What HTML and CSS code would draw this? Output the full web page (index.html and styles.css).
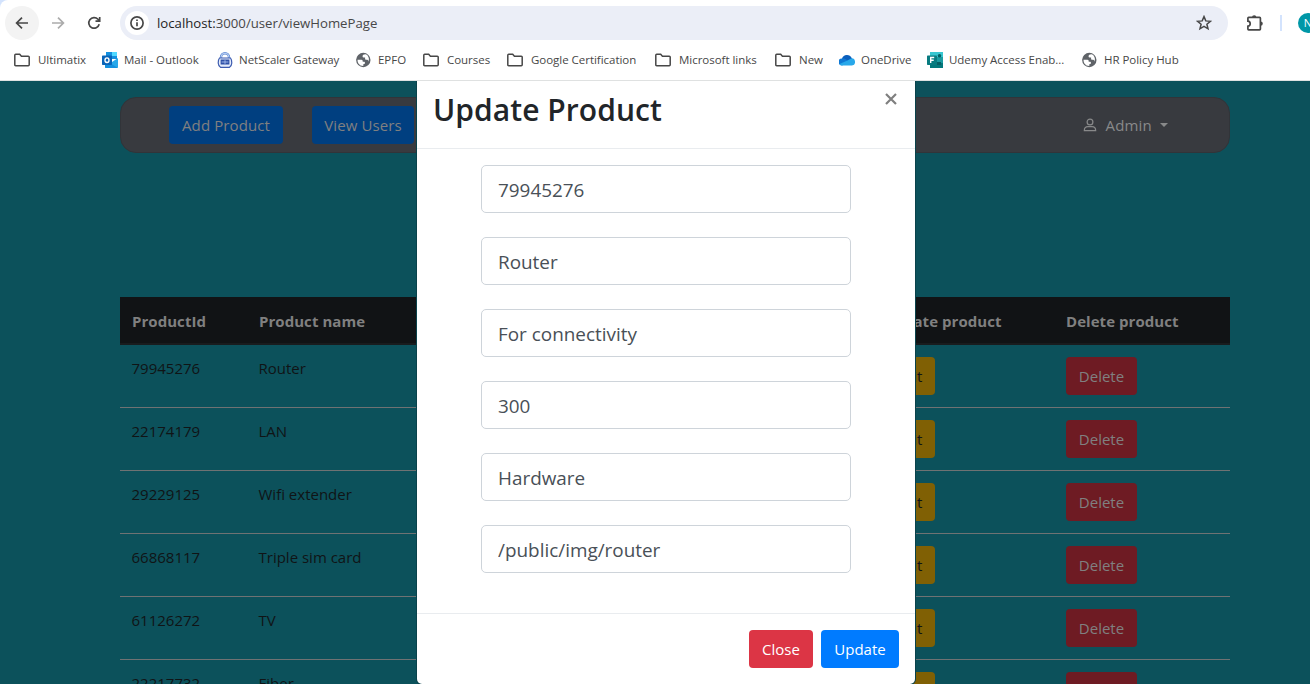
FILE: index.html
```html
<!DOCTYPE html>
<html lang="en">
<head>
<meta charset="utf-8">
<title>Update Product</title>
<link rel="stylesheet" href="styles.css">
</head>
<body>
<svg class="defs" aria-hidden="true">
  <symbol id="folder" viewBox="0 0 16 16"><path d="M.8 3.200q0-.9.9-.9h4l1.700 1.900h6.900q.9 0 .9.9v7.700q0 .9-.9.9H1.700q-.9 0-.9-.9z" fill="none" stroke="#474747" stroke-width="1.500"/></symbol>
  <symbol id="globe" viewBox="0 0 16 16"><circle cx="7.300" cy="8" r="7.200" fill="#5f6368"/><path d="M1.500 7.700h3.800q1.400 0 1.400 1.400v.6h1.600q.6 0 .6.800v1.300q-1.600 0-1.600.8v1.500Q4.100 14 2.600 11.700 1.400 9.800 1.500 7.700zM9.900 2.300l-1.900.1q-1.400.3-1.400 1.500v.9q0 .8 1 .8h1.500v1.400q0 .8.800.8h1.300q.8 0 1 .8l.3 1.100q1.100-2.600-.1-4.800-.8-1.700-2.500-2.600z" fill="#fff"/></symbol>
</svg>
<div class="window">
  <header class="chrome">
    <div class="toolbar">
      <span class="nav-btn current"><svg width="20" height="20" viewBox="0 0 20 20"><path d="M16 10H4.800M10 4.600L4.600 10l5.400 5.400" class="ink"/></svg></span>
      <span class="nav-btn faded"><svg width="20" height="20" viewBox="0 0 20 20"><path d="M4 10h11.200M10 4.600l5.400 5.400-5.400 5.400" class="ink"/></svg></span>
      <span class="nav-btn"><svg width="20" height="20" viewBox="0 0 20 20"><path d="M15.200 11.300A5.300 5.300 0 1 1 14 6.300l1.400 1.600M15.700 4v4.200h-4.200" class="ink"/></svg></span>
      <div class="omnibox">
        <span class="info"><svg width="16" height="16" viewBox="0 0 16 16"><circle cx="8" cy="8" r="6.100" class="ink"/><path d="M8 7.200v4M8 4.400v1.500" class="ink"/></svg></span>
        <span class="url"><b>localhost:</b>3000/user/viewHomePage</span>
        <svg class="star" width="16" height="16" viewBox="0 0 16 16"><path d="M8 1.600l1.800 4.300 4.600.4-3.500 3 1.100 4.500-4-2.400-4 2.400 1.100-4.500-3.500-3 4.600-.4z" class="ink thin"/></svg>
      </div>
      <svg class="puzzle" width="18" height="18" viewBox="0 0 18 18"><path d="M1.900 4.200q0-.8.8-.8h10.900q.8 0 .8.800v10.900q0 .8-.8.8H2.700q-.8 0-.8-.8v-2.900q2.300-.3 2.300-2.500T1.900 7.200z" class="ink"/><path d="M6 3.400a2.200 2.200 0 0 1 4.400 0zM14.600 7.400a2.200 2.200 0 0 1 0 4.400z" fill="#474747"/></svg>
      <span class="divider"></span>
      <span class="avatar">N</span>
    </div>
    <nav class="bookmarks">
      <span class="bm folder"><svg><use href="#folder"/></svg>Ultimatix</span>
      <span class="bm"><svg viewBox="0 0 16 16"><path d="M4 0h11v7H4z" fill="#1490df"/><path d="M10 0h5v4h-5z" fill="#50d9ff"/><path d="M4 4h6v4H4z" fill="#0364b8"/><path d="M3 7l7 3 6-4v9q0 1-1 1H4q-1 0-1-1z" fill="#28a8ea"/><path d="M3 8l13 8H4q-1 0-1-1z" fill="#1490df"/><rect y="3.500" width="10" height="9.500" rx=".7" fill="#0a64b8"/><ellipse cx="5" cy="8.200" rx="2" ry="2.300" fill="none" stroke="#fff" stroke-width="1.400"/></svg>Mail - Outlook</span>
      <span class="bm"><svg viewBox="0 0 16 16"><path d="M4 7.500V5.200a4 4 0 0 1 8 0v2.300" fill="none" stroke="#5f8ad6" stroke-width="2.400"/><path d="M4 7.500V5.200a4 4 0 0 1 8 0v2.300" fill="none" stroke="#dce8fa" stroke-width=".8"/><path d="M2.500 6h11q1.500 2 1.300 5-.2 3-2.300 4.300h-9Q1.400 14 1.200 11 1 8 2.500 6z" fill="#e6edfb" stroke="#3c5bb0" stroke-width="1.200"/><path d="M3.600 7.500h8.800v5H3.600z" fill="#2f51a8"/><path d="M8 8.200v3.600M4.600 10h6.800" stroke="#a9c0ee" stroke-width=".9"/></svg>NetScaler Gateway</span>
      <span class="bm"><svg><use href="#globe"/></svg>EPFO</span>
      <span class="bm folder"><svg><use href="#folder"/></svg>Courses</span>
      <span class="bm folder"><svg><use href="#folder"/></svg>Google Certification</span>
      <span class="bm folder"><svg><use href="#folder"/></svg>Microsoft links</span>
      <span class="bm folder"><svg><use href="#folder"/></svg>New</span>
      <span class="bm"><svg viewBox="0 0 16 16"><path d="M3 6.500A5.300 5.300 0 0 1 12.700 6L14 9l-9 3z" fill="#0a5fbd"/><path d="M3 13.400A3.500 3.500 0 0 1 3 6.400q2-.3 3.700.9L11 10l-8 3.400z" fill="#0f78d4"/><path d="M8.500 8.500L12 6.400a3.500 3.500 0 0 1 1 7H3q-1.700 0-2.500-1.500z" fill="#28a8ea"/></svg>OneDrive</span>
      <span class="bm"><svg viewBox="0 0 16 16"><path d="M3 0h13v16H3z" fill="#1a9ba1"/><path d="M3 0h13v5H3z" fill="#37c6d0"/><path d="M3 11h13v5H3z" fill="#03787c"/><path d="M10 10h4v3h-4z" fill="#055e63"/><circle cx="12.500" cy="3.800" r="1.800" fill="#055e63"/><rect y="3.500" width="10" height="9.500" rx=".7" fill="#087b80"/><path d="M3.700 11V5.500h3.500M3.700 8.300h3" stroke="#fff" stroke-width="1.400" fill="none"/></svg>Udemy Access Enab...</span>
      <span class="bm"><svg><use href="#globe"/></svg>HR Policy Hub</span>
    </nav>
  </header>
  <main class="page">
    <div class="navbar">
      <button class="btn blue-dim">Add Product</button>
      <button class="btn blue-dim users">View Users</button>
      <span class="account"><svg width="14" height="14" viewBox="0 0 14 14"><circle cx="7" cy="4" r="2.900"/><path d="M1.300 12.700q0-4 3.700-4h4q3.700 0 3.700 4z"/></svg>Admin<i class="caret"></i></span>
    </div>
    <table class="products">
      <colgroup><col class="c-id"><col class="c-name"><col class="c-update"><col class="c-delete"></colgroup>
      <thead><tr><th>ProductId</th><th>Product name</th><th>Update product</th><th>Delete product</th></tr></thead>
      <tbody>
        <tr><td>79945276</td><td>Router</td><td><button class="btn gold">Edit</button></td><td><button class="btn red-dim">Delete</button></td></tr>
        <tr><td>22174179</td><td>LAN</td><td><button class="btn gold">Edit</button></td><td><button class="btn red-dim">Delete</button></td></tr>
        <tr><td>29229125</td><td>Wifi extender</td><td><button class="btn gold">Edit</button></td><td><button class="btn red-dim">Delete</button></td></tr>
        <tr><td>66868117</td><td>Triple sim card</td><td><button class="btn gold">Edit</button></td><td><button class="btn red-dim">Delete</button></td></tr>
        <tr><td>61126272</td><td>TV</td><td><button class="btn gold">Edit</button></td><td><button class="btn red-dim">Delete</button></td></tr>
        <tr><td>22217732</td><td>Fiber</td><td><button class="btn gold">Edit</button></td><td><button class="btn red-dim">Delete</button></td></tr>
      </tbody>
    </table>
    <section class="modal">
      <div class="modal-head"><h2>Update Product</h2><svg class="close" width="12" height="12" viewBox="0 0 12 12"><path d="M1 1l10 10M11 1L1 11"/></svg></div>
      <form class="modal-body">
        <input class="field" value="79945276">
        <input class="field" value="Router">
        <input class="field" value="For connectivity">
        <input class="field" value="300">
        <input class="field" value="Hardware">
        <input class="field" value="/public/img/router">
      </form>
      <div class="modal-foot"><button class="btn red">Close</button><button class="btn blue">Update</button></div>
    </section>
  </main>
</div>
</body>
</html>
```
FILE: styles.css
```css
* { box-sizing: border-box; }
body { margin: 0; font: 15px/24px "Open Sans", "Noto Sans", sans-serif; }
.defs { display: none; }
.window { width: 1310px; height: 684px; overflow: hidden; background: #d3e3fd; display: flex; flex-direction: column; }
.chrome { height: 81px; flex: none; background: #fff; border-top-left-radius: 8px; border-bottom: 1px solid #dfe1e1; }
.toolbar { display: flex; align-items: center; height: 46px; padding-left: 5px; }
.toolbar > * { flex: none; }
.nav-btn { width: 34px; height: 34px; margin-right: 2px; border-radius: 50%; display: flex; align-items: center; justify-content: center; }
.current { background: #f3f3f3; }
.faded { opacity: .45; }
.ink { fill: none; stroke: #474747; stroke-width: 1.7; }
.thin { stroke-width: 1.5; }
.omnibox { width: 1108px; height: 34px; margin-left: 7px; border-radius: 17px; background: #ebeef7; display: flex; align-items: center; padding: 0 16px 0 5px; }
.info { width: 24px; height: 24px; border-radius: 50%; background: #fff; display: flex; align-items: center; justify-content: center; }
.url { margin-left: 8px; font-size: 13.2px; color: #474747; }
.url b { font-weight: 400; color: #1f1f1f; }
.star { margin-left: auto; }
.puzzle { margin-left: 18px; }
.divider { width: 2px; height: 16px; margin-left: 16px; background: #d3e3fd; }
.avatar { width: 20px; height: 20px; margin-left: 16px; border-radius: 50%; background: #0097a7; color: #fff; font-size: 11px; line-height: 20px; text-align: center; }
.bookmarks { display: grid; grid-template-columns: 88px 115px 139px 67px 84px 148px 120px 64px 88px 155px auto; padding-left: 14px; height: 28px; align-items: center; }
.bm { display: flex; align-items: center; gap: 6px; font-size: 11.5px; letter-spacing: -.03px; color: #474747; white-space: nowrap; }
.bm.folder { gap: 8px; }
.bm svg { width: 16px; height: 16px; flex: none; }
.page { flex: 1; position: relative; overflow: hidden; background: #0c515b; padding: 16px 80px 0 120px; }
.navbar { height: 56px; border: 1px solid #313439; border-radius: 16px; background: #383a3f; display: flex; align-items: center; padding: 0 61px 0 48px; }
.btn { height: 38px; padding: 0; border: 0; border-radius: 4px; font: inherit; display: block; text-align: center; }
.blue-dim { width: 114px; background: #003f80; color: #808080; letter-spacing: .1px; }
.users { width: 102px; margin-left: 29px; }
.account { margin-left: auto; display: flex; align-items: center; color: #88898a; letter-spacing: .2px; }
.account svg { margin-right: 8px; fill: none; stroke: #88898a; stroke-width: 1.2; }
.caret { margin-left: 8px; border: 4.5px solid transparent; border-top-color: #88898a; border-bottom: 0; }
.products { width: 1110px; margin-top: 144px; table-layout: fixed; border-collapse: separate; border-spacing: 0; color: #101416; }
.c-id { width: 127px; }
.c-name { width: 624px; }
.c-update { width: 183px; }
.c-delete { width: 176px; }
.products th { height: 48px; padding: 2px 12px 0; background: #111315; border-bottom: 2px solid #191c1e; color: #808080; text-align: left; font-weight: 700; letter-spacing: .05px; }
.products td { height: 63px; padding: 11px 12px 12px 11.5px; border-bottom: 1px solid #6f7273; vertical-align: top; }
.products td .btn { margin: 1px 0 0 .5px; }
.gold { width: 52px; background: #806004; color: #101416; }
.red-dim { width: 71px; background: #6e1b23; color: #808080; }
.modal { position: absolute; left: 417px; top: 0; width: 498px; height: 603px; background: #fff; border-radius: 0 0 5px 5px; box-shadow: 0 0 0 1px #0a424b; }
.modal-head { height: 68px; display: flex; justify-content: space-between; padding: 10px 18px 0 16px; border-bottom: 1px solid #e9ecef; }
.modal-head h2 { margin: 0; font-size: 30px; line-height: 38px; font-weight: 600; color: #212529; letter-spacing: .05px; }
.close { margin-top: 2px; fill: none; stroke: #7f7f7f; stroke-width: 2.2; }
.modal-body { margin: 0; padding: 16px 64px 0; height: 464px; display: flex; flex-direction: column; gap: 24px; }
.field { flex: none; width: 370px; height: 48px; padding: 2px 16px 0; border: 1px solid #ced4da; border-radius: 5px; font: 18.9px "Open Sans", sans-serif; color: #495057; background: #fff; }
.modal-foot { display: flex; justify-content: flex-end; gap: 8px; padding: 16px; border-top: 1px solid #e9ecef; }
.red { width: 64px; background: #dc3545; color: #fff; }
.blue { width: 78px; background: #007bff; color: #fff; }
```
